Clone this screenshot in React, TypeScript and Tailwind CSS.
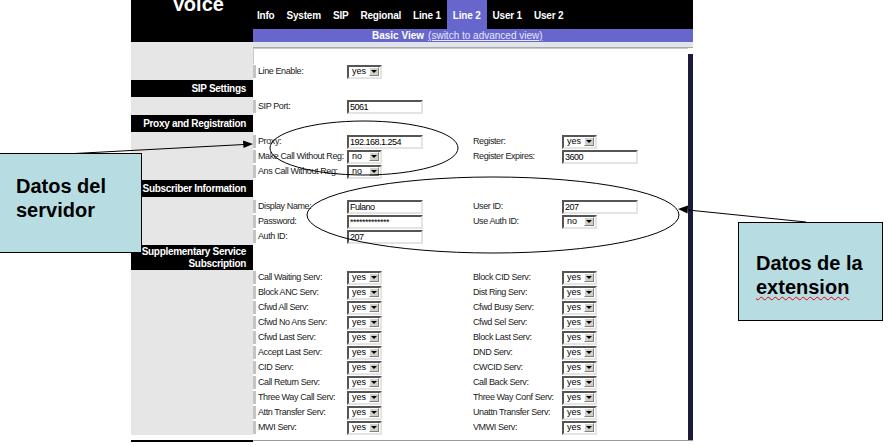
import React from 'react';

type Ctrl = { kind: 'text' | 'select'; value: string } | null;

interface FieldRow {
  label: string;
  ctrl: Ctrl;
  rlabel?: string;
  rctrl?: Ctrl;
}

const tabs = ['Info', 'System', 'SIP', 'Regional', 'Line 1', 'Line 2', 'User 1', 'User 2'];

const yes: Ctrl = { kind: 'select', value: 'yes' };
const no: Ctrl = { kind: 'select', value: 'no' };

const proxyRows: FieldRow[] = [
  { label: 'Proxy:', ctrl: { kind: 'text', value: '192.168.1.254' }, rlabel: 'Register:', rctrl: yes },
  { label: 'Make Call Without Reg:', ctrl: no, rlabel: 'Register Expires:', rctrl: { kind: 'text', value: '3600' } },
  { label: 'Ans Call Without Reg:', ctrl: no },
];

const subscriberRows: FieldRow[] = [
  { label: 'Display Name:', ctrl: { kind: 'text', value: 'Fulano' }, rlabel: 'User ID:', rctrl: { kind: 'text', value: '207' } },
  { label: 'Password:', ctrl: { kind: 'text', value: '*************' }, rlabel: 'Use Auth ID:', rctrl: no },
  { label: 'Auth ID:', ctrl: { kind: 'text', value: '207' } },
];

const suppRows: FieldRow[] = [
  ['Call Waiting Serv:', 'Block CID Serv:'],
  ['Block ANC Serv:', 'Dist Ring Serv:'],
  ['Cfwd All Serv:', 'Cfwd Busy Serv:'],
  ['Cfwd No Ans Serv:', 'Cfwd Sel Serv:'],
  ['Cfwd Last Serv:', 'Block Last Serv:'],
  ['Accept Last Serv:', 'DND Serv:'],
  ['CID Serv:', 'CWCID Serv:'],
  ['Call Return Serv:', 'Call Back Serv:'],
  ['Three Way Call Serv:', 'Three Way Conf Serv:'],
  ['Attn Transfer Serv:', 'Unattn Transfer Serv:'],
  ['MWI Serv:', 'VMWI Serv:'],
].map(([l, r]) => ({ label: l, ctrl: yes, rlabel: r, rctrl: yes }));

function Control({ ctrl }: { ctrl: Ctrl }) {
  if (!ctrl) return null;
  if (ctrl.kind === 'text') {
    return (
      <div className="w-[76px] h-[14px] border-2 border-t-[#555] border-l-[#555] border-r-[#e4e4e4] border-b-[#e4e4e4] bg-white pl-[1px] text-[9px] leading-[10px] tracking-[-0.5px] text-black overflow-hidden whitespace-nowrap">
        {ctrl.value}
      </div>
    );
  }
  return (
    <div className="w-[35px] h-[14px] flex items-center justify-between border-2 border-t-[#555] border-l-[#555] border-r-[#e4e4e4] border-b-[#e4e4e4] bg-white pl-[3px] pr-[1px]">
      <span className="text-[9px] leading-none text-black">{ctrl.value}</span>
      <span className="w-[10px] h-[9px] bg-[#d4d0c8] border border-t-white border-l-white border-r-[#808080] border-b-[#808080] flex items-center justify-center">
        <span className="w-0 h-0 border-l-[3px] border-r-[3px] border-t-[3px] border-l-transparent border-r-transparent border-t-black" />
      </span>
    </div>
  );
}

function Row({ label, ctrl, rlabel, rctrl }: FieldRow) {
  return (
    <div className="flex h-[15px]">
      <div className="w-[122px] bg-[#e6e6e6]" />
      <div className="w-[435px] bg-white flex items-center">
        <div className="w-[3px] h-[13px] bg-[#c4c4c4]" />
        <div className="w-[91px] pl-[2px] text-[9px] tracking-[-0.4px] text-[#222] whitespace-nowrap">{label}</div>
        <div className="w-[126px]"><Control ctrl={ctrl} /></div>
        <div className="w-[89px] text-[9px] tracking-[-0.4px] text-[#222] whitespace-nowrap">{rlabel}</div>
        <div><Control ctrl={rctrl ?? null} /></div>
      </div>
    </div>
  );
}

function Header({ lines, tall }: { lines: string[]; tall?: boolean }) {
  return (
    <div className={tall ? 'flex h-[26px]' : 'flex h-[20px]'}>
      <div className="w-[122px] bg-[#e6e6e6] pt-[1px]">
        <div className={(tall ? 'h-[25px] leading-[12px] pt-[1px]' : 'h-[17px] leading-[17px]') + ' bg-black text-white font-bold text-[10px] tracking-[-0.3px] text-right pr-[7px] whitespace-nowrap'}>
          {lines.map((l) => (
            <div key={l}>{l}</div>
          ))}
        </div>
      </div>
      <div className="w-[435px] bg-white" />
    </div>
  );
}

export default function App() {
  return (
    <div className="relative w-[890px] h-[445px] overflow-hidden bg-white font-['Liberation_Sans',Arial,sans-serif]">
      <div className="ml-[131px] w-[562px] flex flex-col">
        {/* Top bar */}
        <div className="flex h-[29px] bg-black">
          <div className="w-[122px] overflow-hidden">
            <div className="mt-[-6px] pl-[41px] text-white font-bold text-[20px] leading-[20px]">Voice</div>
          </div>
          <div className="flex-1 flex ml-[-2px]">
            {tabs.map((t) => (
              <div
                key={t}
                className={
                  (t === 'Line 2' ? 'bg-[#6666cc] ' : '') +
                  'h-full flex items-center pt-[1px] px-[6px] text-white font-bold text-[10px] tracking-[-0.2px] whitespace-nowrap'
                }
              >
                {t}
              </div>
            ))}
          </div>
        </div>
        <div className="flex h-[13px]">
          <div className="w-[122px] bg-black" />
          <div className="flex-1 bg-[#6666cc] flex items-center pl-[119px] text-[10px] text-white whitespace-nowrap">
            <span className="font-bold">Basic View</span>
            <span className="ml-[4px] underline text-[#e6e6ff]">(switch to advanced view)</span>
          </div>
        </div>
        <div className="flex h-[6px]">
          <div className="w-[122px] bg-[#e6e6e6]" />
          <div className="flex-1 bg-[#e2e4ec] border-b border-[#a8a8a8]" />
        </div>

        {/* Body */}
        <div className="flex">
          <div className="flex flex-col w-[557px]">
            <div className="flex h-[16px]">
              <div className="w-[122px] bg-[#e6e6e6]" />
              <div className="w-[435px] bg-white border-t border-l border-[#c8c8c8]" />
            </div>
            <Row label="Line Enable:" ctrl={yes} />
            <Header lines={['SIP Settings']} />
            <Row label="SIP Port:" ctrl={{ kind: 'text', value: '5061' }} />
            <Header lines={['Proxy and Registration']} />
            {proxyRows.map((r) => (
              <Row key={r.label} {...r} />
            ))}
            <Header lines={['Subscriber Information']} />
            {subscriberRows.map((r) => (
              <Row key={r.label} {...r} />
            ))}
            <Header lines={['Supplementary Service', 'Subscription']} tall />
            {suppRows.map((r) => (
              <Row key={r.label} {...r} />
            ))}
          </div>
          <div className="w-[5px] pt-[6px]">
            <div className="h-[386px] bg-[#1c1c3a]" />
          </div>
        </div>
        <div className="flex">
          <div className="w-[122px] h-[2px] bg-black" />
          <div className="flex-1 h-[1px] bg-[#9a9a9a]" />
        </div>
      </div>

      {/* Annotations */}
      <svg className="absolute inset-0 pointer-events-none" width="890" height="445" viewBox="0 0 890 445">
        <ellipse cx="364" cy="148" rx="94" ry="27" fill="none" stroke="black" strokeWidth="1" />
        <ellipse cx="493" cy="215" rx="186" ry="38" fill="none" stroke="black" strokeWidth="1" />
        <line x1="65" y1="154" x2="244" y2="144.5" stroke="black" strokeWidth="1" />
        <polygon points="253,144 243,140.5 243.5,148" fill="black" />
        <line x1="806" y1="222" x2="688" y2="210" stroke="black" strokeWidth="1" />
        <polygon points="678,209 688,205.5 687.5,213.5" fill="black" />
      </svg>

      <div className="absolute left-[-1px] top-[153px] w-[143px] h-[100px] bg-[#b7dde3] border border-black pl-[16px] pt-[20px] text-[20px] leading-[24px] font-bold text-black">
        <div>Datos del</div>
        <div>servidor</div>
      </div>
      <div className="absolute left-[738px] top-[222px] w-[145px] h-[99px] bg-[#b7dde3] border border-black pl-[17px] pt-[28px] text-[20px] leading-[24px] font-bold text-black">
        <div>Datos de la</div>
        <div>
          <span className="underline decoration-wavy decoration-red-600 decoration-1 underline-offset-2">extension</span>
        </div>
      </div>
    </div>
  );
}
